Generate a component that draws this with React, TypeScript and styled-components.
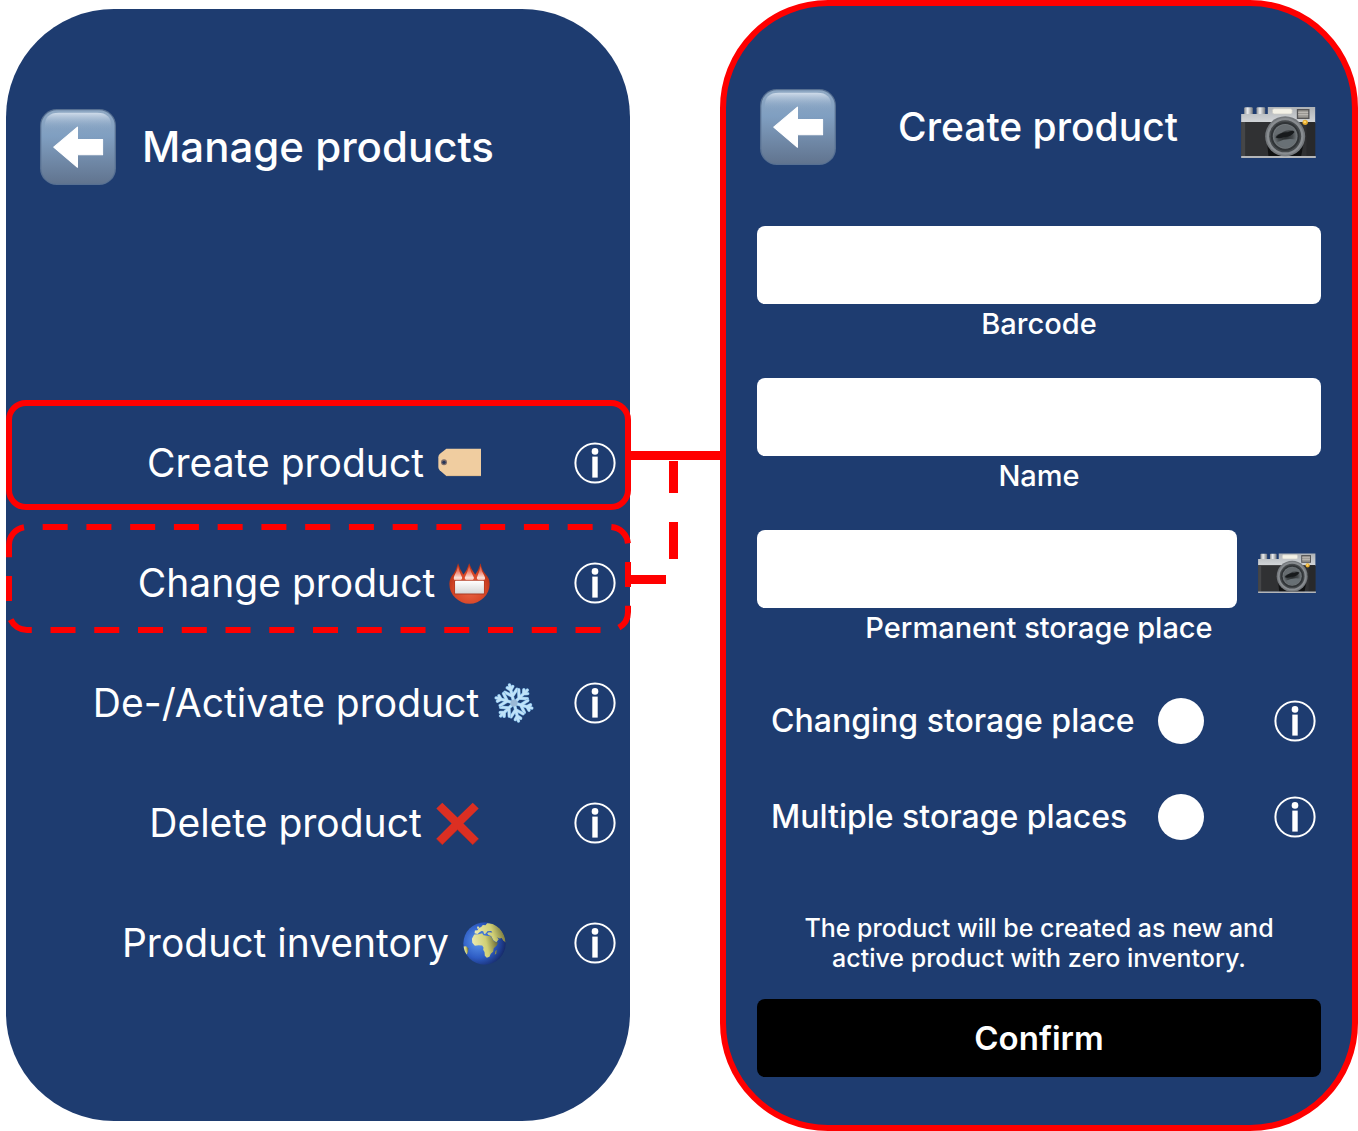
import React, { useId } from "react";
import styled, { createGlobalStyle } from "styled-components";

const RED = "#ff0000";
const NAVY = "#1e3c70";

const GlobalStyle = createGlobalStyle`
  *, *::before, *::after { box-sizing: border-box; }
  body {
    margin: 0;
    background: #ffffff;
    font-family: Inter, "Liberation Sans", sans-serif;
    color: #ffffff;
  }
  button, input { font: inherit; color: inherit; }
`;

const Board = styled.main`
  display: grid;
  grid-template-columns: minmax(0, 624fr) 90px minmax(0, 638fr);
  align-items: stretch;
  padding-left: 6px;
`;

const Phone = styled.section<{ $outlined?: boolean }>`
  background: ${NAVY};
  border-radius: 108px;
  ${(p) => (p.$outlined ? `border: 6px solid ${RED}; padding: 83px 31px 48px;` : "margin: 9px 0 10px; padding-top: 100px;")}
`;

const IconButton = styled.button`
  display: flex;
  align-items: center;
  justify-content: center;
  padding: 0;
  border: 0;
  background: none;
  cursor: pointer;
`;

const MenuHeader = styled.header`
  display: flex;
  align-items: center;
  gap: 26px;
  padding-left: 34px;
`;

const FormHeader = styled.header`
  display: grid;
  grid-template-columns: 76px 1fr 76px;
  align-items: center;
  padding: 0 5px 0 3px;
`;

const Title = styled.h1<{ $size: number; $center?: boolean }>`
  margin: 0;
  font-size: ${(p) => p.$size}px;
  line-height: 56px;
  font-weight: 500;
  white-space: nowrap;
  text-align: ${(p) => (p.$center ? "center" : "left")};
`;

const MenuList = styled.ul`
  list-style: none;
  margin: 218px 0 0;
  padding: 0;
`;

const MenuItem = styled.li`
  position: relative;
  display: grid;
  grid-template-columns: 1fr auto 1fr;
  align-items: center;
  height: 120px;
  padding: 0 14px 0 6px;
`;

const MenuAction = styled.button`
  grid-column: 2;
  display: flex;
  align-items: center;
  gap: 14px;
  padding: 0;
  border: 0;
  background: none;
  font-size: 39px;
  line-height: 56px;
  white-space: nowrap;
  cursor: pointer;
`;

const InfoSlot = styled.div`
  justify-self: end;
`;

const SolidMark = styled.div`
  position: absolute;
  inset: -3px -1px auto 0;
  height: 110px;
  border: 6px solid ${RED};
  border-radius: 20px;
  pointer-events: none;
`;

const DashedMark = styled.svg`
  position: absolute;
  top: 1px;
  left: 0;
  width: calc(100% + 1px);
  height: 110px;
  pointer-events: none;
`;

const Link = styled.div`
  padding-top: 451px;

  svg {
    display: block;
    overflow: visible;
  }
`;

const Form = styled.form`
  display: flex;
  flex-direction: column;
  margin: 61px 0 0;
`;

const Field = styled.div`
  display: flex;
  flex-direction: column;
  margin-bottom: 34px;
`;

const FieldRow = styled.div`
  display: flex;
  align-items: center;
  gap: 21px;
  padding-right: 5px;
`;

const TextBox = styled.input`
  flex: 1;
  width: 100%;
  min-width: 0;
  min-height: 78px;
  padding: 0 20px;
  border: 0;
  border-radius: 8px;
  background: #ffffff;
  color: #000000;
  font-size: 30px;
`;

const FieldLabel = styled.label`
  font-size: 29px;
  line-height: 40px;
  font-weight: 500;
  text-align: center;
`;

const Options = styled.div`
  display: flex;
  flex-direction: column;
  gap: 50px;
  margin-top: 16px;
`;

const Option = styled.div`
  display: grid;
  grid-template-columns: minmax(0, 387px) 46px 1fr;
  align-items: center;
  height: 46px;
  padding: 0 5px 0 14px;
`;

const OptionLabel = styled.label`
  font-size: 32px;
  line-height: 46px;
  font-weight: 500;
  white-space: nowrap;
`;

const Dot = styled.input`
  appearance: none;
  width: 46px;
  height: 46px;
  margin: 0;
  border-radius: 50%;
  background: #ffffff;
  cursor: pointer;

  &:checked {
    box-shadow: inset 0 0 0 12px #ffffff, inset 0 0 0 23px #000000;
  }
`;

const Note = styled.p`
  margin: 73px 0 26px;
  font-size: 25px;
  line-height: 30px;
  font-weight: 500;
  text-align: center;
`;

const Confirm = styled.button`
  height: 78px;
  border: 0;
  border-radius: 8px;
  background: #000000;
  font-size: 33px;
  font-weight: 600;
  cursor: pointer;
`;

function BackIcon() {
  const id = useId();
  return (
    <svg width="76" height="76" viewBox="0 0 227 227" aria-hidden="true">
      <defs>
        <linearGradient id={`${id}a`} x1="0" y1="0" x2="0" y2="1">
          <stop offset="0" stopColor="#8fa8c3" />
          <stop offset="0.35" stopColor="#809fc1" />
          <stop offset="1" stopColor="#61748f" />
        </linearGradient>
        <linearGradient id={`${id}b`} x1="0" y1="0" x2="0" y2="1">
          <stop offset="0" stopColor="#d0dcea" />
          <stop offset="1" stopColor="#83a1c3" stopOpacity="0" />
        </linearGradient>
      </defs>
      <rect width="227" height="227" rx="50" fill="#577092" />
      <rect x="4" y="4" width="219" height="219" rx="46" fill={`url(#${id}a)`} />
      <path d="M14 64V52Q14 11 56 11H171Q213 11 213 52V64Z" fill={`url(#${id}b)`} />
      <path
        d="M41 114 112 54V91H187V137H112V174Z"
        fill="#fff"
        stroke="#fff"
        strokeWidth="3"
        strokeLinejoin="round"
      />
    </svg>
  );
}

function CameraIcon({ width }: { width: number }) {
  const id = useId();
  return (
    <svg width={width} height={Math.round((width * 186) / 224)} viewBox="0 -33 224 186" aria-hidden="true">
      <defs>
        <linearGradient id={`${id}t`} x1="0" y1="0" x2="0" y2="1">
          <stop offset="0" stopColor="#aeb2b6" />
          <stop offset="1" stopColor="#d4d7da" />
        </linearGradient>
        <linearGradient id={`${id}k`} x1="0" y1="0" x2="1" y2="0">
          <stop offset="0" stopColor="#8b8f93" />
          <stop offset="0.4" stopColor="#eceef0" />
          <stop offset="1" stopColor="#777b80" />
        </linearGradient>
        <radialGradient id={`${id}l`}>
          <stop offset="0" stopColor="#24282a" />
          <stop offset="0.6" stopColor="#44494c" />
          <stop offset="1" stopColor="#777d81" />
        </radialGradient>
      </defs>
      <rect x="9" y="1" width="26" height="22" rx="3" fill={`url(#${id}k)`} />
      <rect x="46" y="1" width="26" height="22" rx="3" fill={`url(#${id}k)`} />
      <path d="M0 21H80V0H222V48H0Z" fill={`url(#${id}t)`} />
      <rect x="0" y="45" width="222" height="103" fill="#303133" />
      <rect x="0" y="45" width="12" height="103" fill="#454648" />
      <path d="M75 80H192L180 148H82Z" fill="#101112" />
      <rect x="196" y="45" width="26" height="103" fill="#28292b" />
      <path d="M0 147H224V153H0Z" fill="#b4b6b9" />
      <rect x="94" y="5" width="59" height="16" rx="5" fill="#f3f1e6" stroke="#c9c8c2" strokeWidth="2" />
      <rect x="167" y="6" width="38" height="30" fill="#555557" />
      <rect x="171" y="10" width="30" height="22" fill="#9b9893" />
      <path d="M171 16H201M171 23H201" stroke="#c1bdb8" strokeWidth="3" />
      <circle cx="132" cy="88" r="60" fill="#74787c" />
      <circle cx="132" cy="88" r="55" fill="#898d91" />
      <circle cx="132" cy="88" r="48" fill="#45494c" />
      <circle cx="132" cy="88" r="43" fill="#303437" />
      <circle cx="132" cy="88" r="37" fill={`url(#${id}l)`} />
      <path d="M99 86Q104 62 128 55Q151 54 162 70Q136 66 120 78Z" fill="#666c70" />
      <path d="M103 91Q119 75 139 76Q155 67 160 75Q149 91 128 90Q112 97 103 91Z" fill="#171a1c" />
      <path d="M108 106Q134 92 165 98Q155 121 133 121Q116 120 108 106Z" fill="#687075" />
      <circle cx="192" cy="46" r="8" fill="#e5aa2c" />
      <circle cx="191" cy="45" r="4" fill="#ffd369" />
    </svg>
  );
}

function InfoIcon() {
  return (
    <svg width="42" height="42" viewBox="-21 -21 42 42" aria-hidden="true" display="block">
      <circle r="19.6" fill="none" stroke="#fff" strokeWidth="2" />
      <circle cy="-11.6" r="3.3" fill="#fff" />
      <rect x="-2.7" y="-6.4" width="5.4" height="21" fill="#fff" />
    </svg>
  );
}

function TagIcon() {
  return (
    <svg width="43" height="43" viewBox="0 0 129 129" aria-hidden="true">
      <path d="M25 20H129V102H25L5 85Q1 81 1 75V46Q1 40 5 36Z" fill="#f0cda0" />
      <path d="M25 101H129" stroke="#d8b488" strokeWidth="2" />
      <circle cx="18" cy="61" r="9" fill="#7c6b68" />
      <circle cx="18" cy="61" r="5" fill="#263659" />
    </svg>
  );
}

function BadgeIcon() {
  const id = useId();
  return (
    <svg width="41" height="41" viewBox="0 0 122 122" aria-hidden="true">
      <defs>
        <radialGradient id={`${id}r`} cx="0.5" cy="0.65" r="0.55">
          <stop offset="0" stopColor="#ea6544" />
          <stop offset="0.7" stopColor="#d84728" />
          <stop offset="1" stopColor="#b93419" />
        </radialGradient>
        <linearGradient id={`${id}f`} x1="0" y1="0" x2="0" y2="1">
          <stop offset="0" stopColor="#dc4a2e" />
          <stop offset="0.4" stopColor="#ee7f6b" />
          <stop offset="0.85" stopColor="#fbe3dc" />
          <stop offset="1" stopColor="#f0a291" />
        </linearGradient>
        <linearGradient id={`${id}w`} x1="0" y1="0" x2="0" y2="1">
          <stop offset="0" stopColor="#ffffff" />
          <stop offset="1" stopColor="#d6d6d6" />
        </linearGradient>
      </defs>
      <path
        d="M27 1Q33 21 43 35Q54 22 60 1Q67 21 78 35Q88 22 94 1Q98 23 110 35Q121 46 121 62A60 59 0 0 1 1 62Q1 45 14 31Q22 20 27 1Z"
        fill={`url(#${id}r)`}
      />
      <path
        d="M27 8Q31 28 39 43Q40 50 32 51H17Q12 48 16 38Q23 26 27 8ZM60 8Q65 28 74 43Q75 50 67 51H54Q46 50 47 43Q55 28 60 8ZM94 8Q97 26 105 38Q110 48 104 51H90Q82 50 83 43Q90 28 94 8Z"
        fill={`url(#${id}f)`}
      />
      <rect x="16" y="51" width="90" height="43" rx="3" fill="#a93a23" />
      <rect x="18" y="53" width="86" height="38" rx="2" fill={`url(#${id}w)`} />
    </svg>
  );
}

function SnowIcon() {
  const arm = "M0 0V-18.6M0 -7 -6.2 -12.6M0 -7 6.2 -12.6M0 -13.4 -2.8 -16.4M0 -13.4 2.8 -16.4";
  return (
    <svg width="42" height="42" viewBox="-21 -21 42 42" aria-hidden="true">
      {[0, 60, 120, 180, 240, 300].map((angle) => (
        <g key={angle} transform={`rotate(${angle - 14})`} fill="none" strokeLinecap="round">
          <path d={arm} stroke="#78b2e2" strokeWidth="3.4" />
          <path d={arm} stroke="#bfe2f8" strokeWidth="2.4" />
        </g>
      ))}
      <circle r="3.6" fill="#9bb9d6" />
    </svg>
  );
}

function CrossIcon() {
  return (
    <svg width="43" height="43" viewBox="0 0 130 130" aria-hidden="true">
      <path d="M19 2 65 47 111 2 129 20 83 65 129 111 111 129 65 84 19 129 1 111 47 65 1 20Z" fill="#dc2f22" />
      <path d="M1 111 19 129 65 84 111 129 129 111" fill="none" stroke="#b72920" strokeWidth="2" />
    </svg>
  );
}

function GlobeIcon() {
  const id = useId();
  return (
    <svg width="43" height="43" viewBox="0 0 130 130" aria-hidden="true">
      <defs>
        <radialGradient id={`${id}o`} cx="0.35" cy="0.45" r="0.65">
          <stop offset="0" stopColor="#5c98ee" />
          <stop offset="0.6" stopColor="#2e5cc4" />
          <stop offset="1" stopColor="#172c6d" />
        </radialGradient>
        <linearGradient id={`${id}e`} x1="0" y1="0.5" x2="1" y2="0.3">
          <stop offset="0" stopColor="#ecebb4" />
          <stop offset="0.55" stopColor="#d0cf74" />
          <stop offset="1" stopColor="#5f6030" />
        </linearGradient>
        <clipPath id={`${id}c`}>
          <circle cx="65" cy="65" r="64" />
        </clipPath>
      </defs>
      <circle cx="65" cy="65" r="64" fill={`url(#${id}o)`} />
      <g clipPath={`url(#${id}c)`} fill={`url(#${id}e)`}>
        <path d="M34 38 48 37 58 34 62 40 76 42 84 43 92 56 99 61 106 62 102 71 93 79 91 90 84 96 80 105 72 108 66 102 65 91 61 84 62 77 58 71 47 70 36 72 28 63 27 51Z" />
        <path d="M35 34 36 26 44 25 48 18 55 15 60 9 68 10 73 4 92 5 112 18 126 42 130 62 122 57 117 48 111 50 103 46 108 52 101 61 92 55 85 42 77 39 73 34 78 31 89 32 85 27 74 28 69 35 64 36 61 28 56 27 49 32 44 36Z" />
        <path d="M1 74 10 73 16 80 15 89 12 98 4 95Z" />
        <path d="M42 18 45 12 49 16 46 22ZM98 88 102 84 101 95 96 99Z" />
      </g>
    </svg>
  );
}

function InfoButton({ topic }: { topic: string }) {
  return (
    <IconButton type="button" aria-label={`About ${topic}`}>
      <InfoIcon />
    </IconButton>
  );
}

const menu = [
  { label: "Create product", icon: <TagIcon />, mark: "solid" },
  { label: "Change product", icon: <BadgeIcon />, mark: "dashed" },
  { label: "De-/Activate product", icon: <SnowIcon /> },
  { label: "Delete product", icon: <CrossIcon /> },
  { label: "Product inventory", icon: <GlobeIcon /> },
];

const options = ["Changing storage place", "Multiple storage places"];

export default function App() {
  return (
    <>
      <GlobalStyle />
      <Board>
        <Phone>
          <MenuHeader>
            <IconButton type="button" aria-label="Back">
              <BackIcon />
            </IconButton>
            <Title $size={42}>Manage products</Title>
          </MenuHeader>
          <MenuList>
            {menu.map((item) => (
              <MenuItem key={item.label}>
                <MenuAction type="button">
                  {item.label}
                  {item.icon}
                </MenuAction>
                <InfoSlot>
                  <InfoButton topic={item.label} />
                </InfoSlot>
                {item.mark === "solid" && <SolidMark />}
                {item.mark === "dashed" && (
                  <DashedMark viewBox="0 0 625 110" preserveAspectRatio="none" aria-hidden="true">
                    <path
                      d="M3 21A18 18 0 0 1 21 3H604A18 18 0 0 1 622 21V88A18 18 0 0 1 604 106H21A18 18 0 0 1 3 88Z"
                      fill="none"
                      stroke={RED}
                      strokeWidth="6"
                      strokeDasharray="25 18.75"
                    />
                  </DashedMark>
                )}
              </MenuItem>
            ))}
          </MenuList>
        </Phone>

        <Link aria-hidden="true">
          <svg width="90" height="134" viewBox="0 0 90 134">
            <path d="M0 4.5H91M43.5 10V42M43.5 71V108M-2 128.5H36" fill="none" stroke={RED} strokeWidth="9" />
          </svg>
        </Link>

        <Phone $outlined>
          <FormHeader>
            <IconButton type="button" aria-label="Back">
              <BackIcon />
            </IconButton>
            <Title as="h2" $size={39} $center>
              Create product
            </Title>
            <IconButton type="button" aria-label="Scan product">
              <CameraIcon width={75} />
            </IconButton>
          </FormHeader>
          <Form onSubmit={(e) => e.preventDefault()}>
            <Field>
              <TextBox id="barcode" type="text" />
              <FieldLabel htmlFor="barcode">Barcode</FieldLabel>
            </Field>
            <Field>
              <TextBox id="name" type="text" />
              <FieldLabel htmlFor="name">Name</FieldLabel>
            </Field>
            <Field>
              <FieldRow>
                <TextBox id="place" type="text" />
                <IconButton type="button" aria-label="Scan storage place">
                  <CameraIcon width={58} />
                </IconButton>
              </FieldRow>
              <FieldLabel htmlFor="place">Permanent storage place</FieldLabel>
            </Field>
            <Options>
              {options.map((label, i) => (
                <Option key={label}>
                  <OptionLabel htmlFor={`option-${i}`}>{label}</OptionLabel>
                  <Dot id={`option-${i}`} type="checkbox" />
                  <InfoSlot>
                    <InfoButton topic={label} />
                  </InfoSlot>
                </Option>
              ))}
            </Options>
            <Note>
              The product will be created as new and
              <br />
              active product with zero inventory.
            </Note>
            <Confirm type="submit">Confirm</Confirm>
          </Form>
        </Phone>
      </Board>
    </>
  );
}
